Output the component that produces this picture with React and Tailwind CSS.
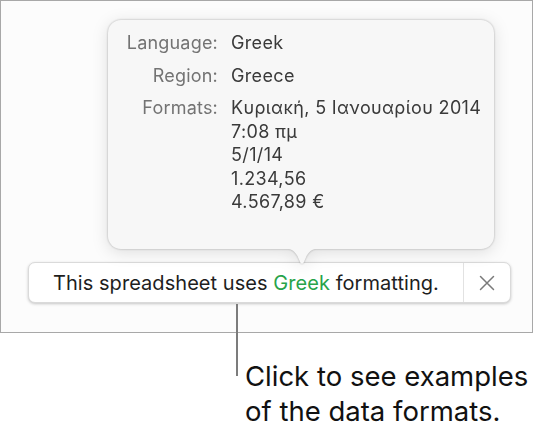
import React from "react";

function Row({ label, children }) {
  return (
    <div className="grid grid-cols-[110px_1fr] gap-x-[13px]">
      <div className="text-right text-[#737373] tracking-[0.2px]">{label}</div>
      <div className="text-[#3a3a3a] tracking-[0.35px]">{children}</div>
    </div>
  );
}

export default function App() {
  return (
    <div className="relative w-[537px] h-[438px] bg-white font-['Inter',sans-serif] antialiased">
      <div className="w-[533px] h-[333px] border border-[#a8a8a8] bg-[#fcfcfc] pt-[19px]">
        <div className="relative z-10 ml-[107px] w-[386px] [filter:drop-shadow(0_0_1px_rgba(0,0,0,0.28))_drop-shadow(0_3px_8px_rgba(0,0,0,0.12))]">
          <div className="h-[229px] rounded-[13px] bg-[#f7f7f7] pt-[11px] flex flex-col gap-[9px] text-[18px] leading-[23.5px]">
            <Row label="Language:">Greek</Row>
            <Row label="Region:">Greece</Row>
            <Row label="Formats:">
              <div>Κυριακή, 5 Ιανουαρίου 2014</div>
              <div>7:08 πμ</div>
              <div>5/1/14</div>
              <div>1.234,56</div>
              <div>4.567,89 €</div>
            </Row>
          </div>
          <svg
            className="absolute left-[173px] top-[228px]"
            width="42"
            height="18"
            viewBox="0 0 42 18"
          >
            <path
              d="M0 0 C9 0 13 2 16.5 8 L19.3 14.5 Q21 17 22.7 14.5 L25.5 8 C29 2 33 0 42 0 Z"
              fill="#f7f7f7"
            />
          </svg>
        </div>
        <div className="ml-[27px] mt-[13px] w-[483px] h-[41px] rounded-[7px] bg-white border border-[#dadada] shadow-[0_1px_3px_rgba(0,0,0,0.22)] flex items-stretch">
          <div className="flex-1 flex items-center pl-[24px] text-[20px] text-[#1e1e1e] tracking-[0.05px]">
            <span>
              This spreadsheet uses <span className="text-[#28a34a]">Greek</span> formatting.
            </span>
          </div>
          <div className="w-px bg-[#e2e2e2]" />
          <div className="w-[46px] flex items-center justify-center">
            <svg width="16" height="16" viewBox="0 0 16 16">
              <path d="M1.5 1.5 L14.5 14.5 M14.5 1.5 L1.5 14.5" stroke="#7a7a7a" strokeWidth="1.5" strokeLinecap="round" />
            </svg>
          </div>
        </div>
      </div>
      <div className="absolute left-[236px] top-[304px] w-[1.5px] h-[72px] bg-[#7c7c7c]" />
      <div className="ml-[245px] mt-[26px] text-[27.5px] leading-[35px] text-[#111]">
        <div>Click to see examples</div>
        <div>of the data formats.</div>
      </div>
    </div>
  );
}
